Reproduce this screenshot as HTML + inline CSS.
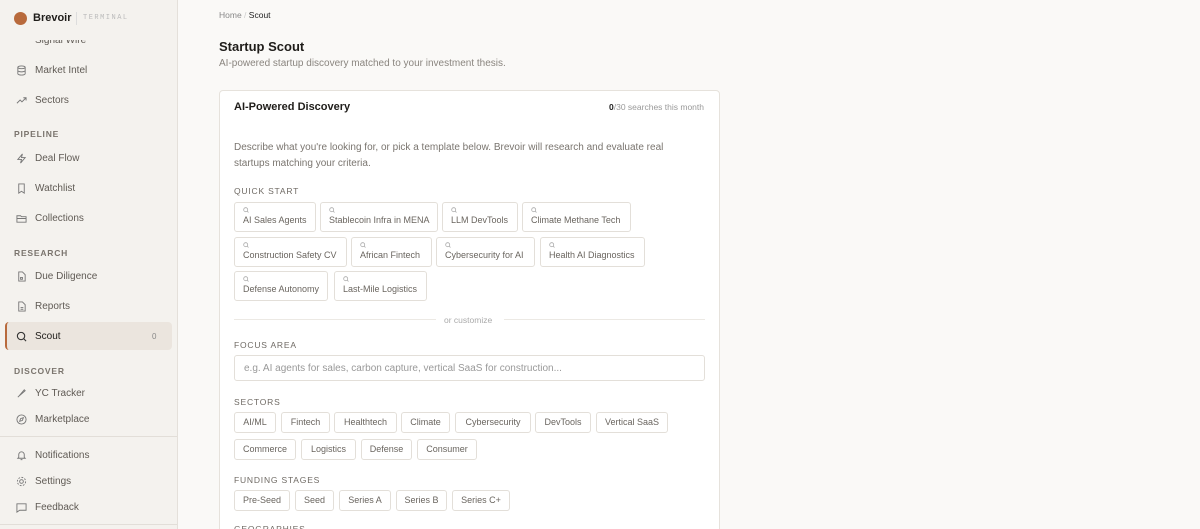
<!DOCTYPE html><html style="overflow:hidden;height:529px"><head><style>
*{box-sizing:border-box;margin:0;padding:0}
body{width:1200px;height:529px;overflow:hidden;background:#faf9f7;font-family:"Liberation Sans",sans-serif;position:relative;color:#1f1d1a}
.sb{position:absolute;left:0;top:0;width:178px;height:529px;background:#f4f2ee;border-right:1px solid #e4e0da}
.a{position:absolute;white-space:nowrap}
.it{position:absolute;left:35px;font-size:10px;color:#5f5a54}
.ic{position:absolute;left:16px;width:11px;height:11px}
.sec{position:absolute;left:14px;font-size:8.5px;letter-spacing:.8px;color:#7a746d;font-weight:bold}
.card{position:absolute;left:219px;top:90px;width:501px;height:460px;background:#fff;border:1px solid #e6e2dc;border-radius:4px}
.lbl{position:absolute;left:234px;font-size:8.5px;letter-spacing:.8px;color:#6f6a64}
.qc{position:absolute;height:30px;border:1px solid #e3dfd9;border-radius:3px;background:#fff;font-size:9px;color:#6a655f;padding:4px 0 0 8px}
.qc svg{display:block;margin-bottom:2px}
.ch{position:absolute;height:21px;border:1px solid #e3dfd9;border-radius:3px;background:#fff;font-size:9px;color:#6a655f;text-align:center;line-height:19px}
</style></head><body>
<div class="sb">
<div class="it" style="top:35px;clip-path:inset(5px 0 0 0)">Signal Wire</div>
<div class="a" style="left:0;top:0;width:177px;height:34px;background:#f4f2ee"></div>
<div class="a" style="left:14px;top:12px;width:13px;height:13px;border-radius:50%;background:#b86a3c"></div>
<div class="a" style="left:33px;top:12px;font-size:11px;font-weight:bold;color:#1f1d1a">Brevoir</div>
<div class="a" style="left:76px;top:12px;width:1px;height:13px;background:#ddd"></div>
<div class="a" style="left:83px;top:14px;font-size:7px;letter-spacing:1.5px;color:#bbb;font-family:'Liberation Mono',monospace">TERMINAL</div>
<div class="it" style="top:65px">Market Intel</div>
<svg class="ic" style="top:65px" viewBox="0 0 12 12" fill="none" stroke="#777" stroke-width="1"><ellipse cx="6" cy="2.5" rx="4" ry="1.5"/><path d="M2 2.5v7c0 .8 1.8 1.5 4 1.5s4-.7 4-1.5v-7M2 6c0 .8 1.8 1.5 4 1.5s4-.7 4-1.5"/></svg>
<div class="it" style="top:95px">Sectors</div>
<svg class="ic" style="top:95px" viewBox="0 0 12 12" fill="none" stroke="#777"><path d="M1 9l3.5-3.5 2 2L11 3M8 3h3v3"/></svg>
<div class="sec" style="top:129px">PIPELINE</div>
<div class="it" style="top:153px">Deal Flow</div>
<svg class="ic" style="top:153px" viewBox="0 0 12 12" fill="none" stroke="#777"><path d="M7 1L2 7h4l-1 4 5-6H6z"/></svg>
<div class="it" style="top:183px">Watchlist</div>
<svg class="ic" style="top:183px" viewBox="0 0 12 12" fill="none" stroke="#777"><path d="M3 1h6v10l-3-2-3 2z"/></svg>
<div class="it" style="top:213px">Collections</div>
<svg class="ic" style="top:213px" viewBox="0 0 12 12" fill="none" stroke="#777"><path d="M1 3h4l1 1h5v6H1zM1 6h10"/></svg>
<div class="sec" style="top:248px">RESEARCH</div>
<div class="it" style="top:271px">Due Diligence</div>
<svg class="ic" style="top:271px" viewBox="0 0 12 12" fill="none" stroke="#777"><path d="M3 1h4l3 3v7H3zM5 7h2v2H5z"/></svg>
<div class="it" style="top:301px">Reports</div>
<svg class="ic" style="top:301px" viewBox="0 0 12 12" fill="none" stroke="#777"><path d="M3 1h4l3 3v7H3zM5 7h3M5 9h3"/></svg>
<div class="a" style="left:5px;top:322px;width:167px;height:28px;background:#ebe5de;border-radius:4px;border-left:2px solid #b86a3c"></div>
<div class="it" style="top:331px;color:#1f1d1a">Scout</div>
<svg class="ic" style="top:331px" viewBox="0 0 12 12" fill="none" stroke="#333" stroke-width="1.2"><circle cx="5.5" cy="5.5" r="4"/><path d="M8.5 8.5L11 11"/></svg>
<div class="a" style="left:152px;top:332px;font-size:8px;color:#888">0</div>
<div class="sec" style="top:366px">DISCOVER</div>
<div class="it" style="top:388px">YC Tracker</div>
<svg class="ic" style="top:388px" viewBox="0 0 12 12" fill="none" stroke="#777"><path d="M3 9l6-7 1 1-7 6zM2 10l2-2"/></svg>
<div class="it" style="top:414px">Marketplace</div>
<svg class="ic" style="top:414px" viewBox="0 0 12 12" fill="none" stroke="#777"><circle cx="6" cy="6" r="5"/><path d="M8 4L5 5 4 8l3-1z"/></svg>
<div class="a" style="left:0;top:436px;width:177px;height:1px;background:#e2ded8"></div>
<div class="it" style="top:450px">Notifications</div>
<svg class="ic" style="top:450px" viewBox="0 0 12 12" fill="none" stroke="#777"><path d="M3 8V5a3 3 0 016 0v3l1 1H2zM5 10.5h2"/></svg>
<div class="it" style="top:476px">Settings</div>
<svg class="ic" style="top:476px" viewBox="0 0 12 12" fill="none" stroke="#777"><circle cx="6" cy="6" r="2"/><circle cx="6" cy="6" r="4.5" stroke-dasharray="2 1.5"/></svg>
<div class="it" style="top:502px">Feedback</div>
<svg class="ic" style="top:502px" viewBox="0 0 12 12" fill="none" stroke="#777"><path d="M1 2h10v7H4l-3 2z"/></svg>
<div class="a" style="left:0;top:524px;width:177px;height:1px;background:#e2ded8"></div>
</div>

<div class="a" style="left:219px;top:10px;font-size:8.5px;color:#888">Home <span style="color:#ccc">/</span> <span style="color:#222">Scout</span></div>
<div class="a" style="left:219px;top:39px;font-size:13px;font-weight:bold">Startup Scout</div>
<div class="a" style="left:219px;top:58px;font-size:10px;color:#8a857f">AI-powered startup discovery matched to your investment thesis.</div>

<div class="card"></div>
<div class="a" style="left:234px;top:101px;font-size:11px;font-weight:bold">AI-Powered Discovery</div>
<div class="a" style="right:496px;top:102px;font-size:8.5px;color:#999"><b style="color:#222">0</b>/30 searches this month</div>
<div class="a" style="left:234px;top:140px;font-size:10px;color:#7a756f;line-height:15.5px">Describe what you're looking for, or pick a template below. Brevoir will research and evaluate real<br>startups matching your criteria.</div>
<div class="lbl" style="top:186px">QUICK START</div>

<div class="qc" style="left:234px;top:202px;width:82px"><svg width="6" height="6" viewBox="0 0 6 6" fill="none" stroke="#aaa" stroke-width=".8"><circle cx="2.7" cy="2.7" r="2"/><path d="M4.2 4.2L5.5 5.5"/></svg>AI Sales Agents</div>
<div class="qc" style="left:320px;top:202px;width:118px"><svg width="6" height="6" viewBox="0 0 6 6" fill="none" stroke="#aaa" stroke-width=".8"><circle cx="2.7" cy="2.7" r="2"/><path d="M4.2 4.2L5.5 5.5"/></svg>Stablecoin Infra in MENA</div>
<div class="qc" style="left:442px;top:202px;width:76px"><svg width="6" height="6" viewBox="0 0 6 6" fill="none" stroke="#aaa" stroke-width=".8"><circle cx="2.7" cy="2.7" r="2"/><path d="M4.2 4.2L5.5 5.5"/></svg>LLM DevTools</div>
<div class="qc" style="left:522px;top:202px;width:109px"><svg width="6" height="6" viewBox="0 0 6 6" fill="none" stroke="#aaa" stroke-width=".8"><circle cx="2.7" cy="2.7" r="2"/><path d="M4.2 4.2L5.5 5.5"/></svg>Climate Methane Tech</div>
<div class="qc" style="left:234px;top:237px;width:113px"><svg width="6" height="6" viewBox="0 0 6 6" fill="none" stroke="#aaa" stroke-width=".8"><circle cx="2.7" cy="2.7" r="2"/><path d="M4.2 4.2L5.5 5.5"/></svg>Construction Safety CV</div>
<div class="qc" style="left:351px;top:237px;width:81px"><svg width="6" height="6" viewBox="0 0 6 6" fill="none" stroke="#aaa" stroke-width=".8"><circle cx="2.7" cy="2.7" r="2"/><path d="M4.2 4.2L5.5 5.5"/></svg>African Fintech</div>
<div class="qc" style="left:436px;top:237px;width:99px"><svg width="6" height="6" viewBox="0 0 6 6" fill="none" stroke="#aaa" stroke-width=".8"><circle cx="2.7" cy="2.7" r="2"/><path d="M4.2 4.2L5.5 5.5"/></svg>Cybersecurity for AI</div>
<div class="qc" style="left:540px;top:237px;width:105px"><svg width="6" height="6" viewBox="0 0 6 6" fill="none" stroke="#aaa" stroke-width=".8"><circle cx="2.7" cy="2.7" r="2"/><path d="M4.2 4.2L5.5 5.5"/></svg>Health AI Diagnostics</div>
<div class="qc" style="left:234px;top:271px;width:94px"><svg width="6" height="6" viewBox="0 0 6 6" fill="none" stroke="#aaa" stroke-width=".8"><circle cx="2.7" cy="2.7" r="2"/><path d="M4.2 4.2L5.5 5.5"/></svg>Defense Autonomy</div>
<div class="qc" style="left:334px;top:271px;width:93px"><svg width="6" height="6" viewBox="0 0 6 6" fill="none" stroke="#aaa" stroke-width=".8"><circle cx="2.7" cy="2.7" r="2"/><path d="M4.2 4.2L5.5 5.5"/></svg>Last-Mile Logistics</div>

<div class="a" style="left:234px;top:319px;width:202px;height:1px;background:#ece9e4"></div>
<div class="a" style="left:444px;top:315px;font-size:8.5px;color:#aaa">or customize</div>
<div class="a" style="left:504px;top:319px;width:201px;height:1px;background:#ece9e4"></div>

<div class="lbl" style="top:340px">FOCUS AREA</div>
<div class="a" style="left:234px;top:355px;width:471px;height:26px;border:1px solid #e3dfd9;border-radius:3px;font-size:10px;color:#999;padding:7px 0 0 9px">e.g. AI agents for sales, carbon capture, vertical SaaS for construction...</div>

<div class="lbl" style="top:397px">SECTORS</div>
<div class="ch" style="left:234px;top:412px;width:42px">AI/ML</div>
<div class="ch" style="left:281px;top:412px;width:49px">Fintech</div>
<div class="ch" style="left:334px;top:412px;width:63px">Healthtech</div>
<div class="ch" style="left:401px;top:412px;width:49px">Climate</div>
<div class="ch" style="left:455px;top:412px;width:76px">Cybersecurity</div>
<div class="ch" style="left:535px;top:412px;width:56px">DevTools</div>
<div class="ch" style="left:596px;top:412px;width:72px">Vertical SaaS</div>
<div class="ch" style="left:234px;top:439px;width:62px">Commerce</div>
<div class="ch" style="left:301px;top:439px;width:55px">Logistics</div>
<div class="ch" style="left:361px;top:439px;width:51px">Defense</div>
<div class="ch" style="left:417px;top:439px;width:60px">Consumer</div>

<div class="lbl" style="top:475px">FUNDING STAGES</div>
<div class="ch" style="left:234px;top:490px;width:56px">Pre-Seed</div>
<div class="ch" style="left:295px;top:490px;width:39px">Seed</div>
<div class="ch" style="left:339px;top:490px;width:52px">Series A</div>
<div class="ch" style="left:396px;top:490px;width:51px">Series B</div>
<div class="ch" style="left:452px;top:490px;width:58px">Series C+</div>
<div class="lbl" style="top:524px">GEOGRAPHIES</div>
</body></html>
